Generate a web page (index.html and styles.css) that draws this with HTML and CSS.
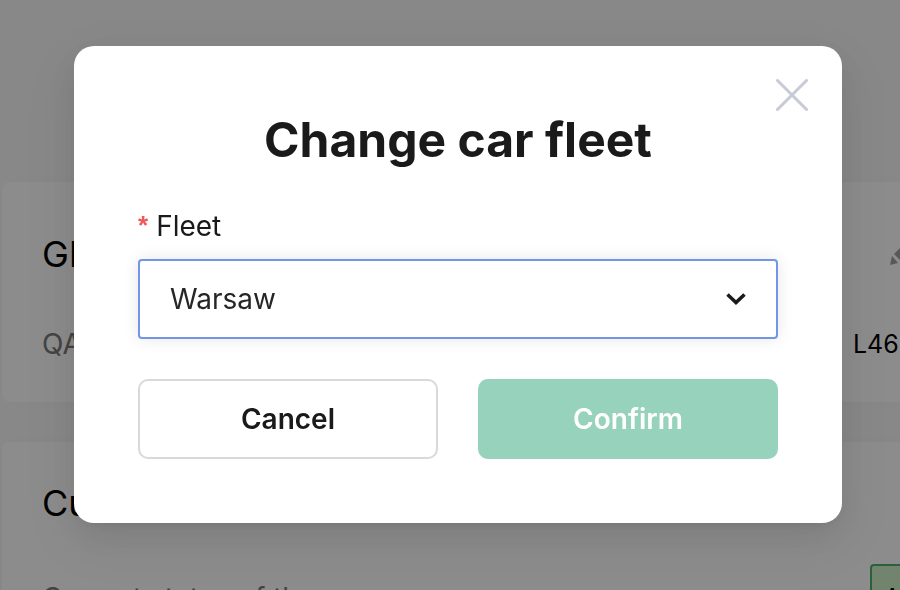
FILE: index.html
```
<!DOCTYPE html>
<html lang="en">
<head>
    <meta charset="UTF-8">
    <meta name="viewport" content="width=device-width, initial-scale=1.0">
    <title>Change car fleet</title>
    <link rel="stylesheet" href="styles.css">
</head>
<body>
    <main class="page">
        <section class="card">
            <div class="card-head card-head-tall">
                <h2>GL</h2>
                <button class="edit" type="button" aria-label="Edit">
                    <svg width="24" height="24" viewBox="0 0 24 24" fill="currentColor">
                        <path d="M0 23L2 14L8 21Z"/>
                        <path d="M4 12L14 2L21 9L11 19Z"/>
                        <path d="M15 1L16 0L23 7L22 8Z"/>
                    </svg>
                </button>
            </div>
            <div class="card-row">
                <span class="label">QA</span>
                <span class="value">L4621119</span>
            </div>
        </section>

        <section class="card">
            <div class="card-head">
                <h2>Cu</h2>
            </div>
            <div class="card-row">
                <span class="label">Current status of the</span>
                <button class="status" type="button">Active</button>
            </div>
        </section>
    </main>

    <div class="overlay">
        <form class="modal" role="dialog" aria-labelledby="modal-title">
            <button class="close" type="button" aria-label="Close">
                <svg width="32" height="32" viewBox="0 0 32 32" fill="none" stroke="currentColor" stroke-width="3" stroke-linecap="round">
                    <path d="M1.5 1.5L30.5 30.5M30.5 1.5L1.5 30.5"/>
                </svg>
            </button>
            <h1 id="modal-title">Change car fleet</h1>
            <label for="fleet"><span class="required">*</span>Fleet</label>
            <div class="select">
                <select id="fleet">
                    <option>Warsaw</option>
                </select>
                <svg class="arrow" width="20" height="12" viewBox="0 0 20 12" fill="none" stroke="currentColor" stroke-width="3.5">
                    <path d="M1.5 1.5L10 9.5L18.5 1.5"/>
                </svg>
            </div>
            <div class="actions">
                <button class="btn" type="button">Cancel</button>
                <button class="btn btn-confirm" type="submit">Confirm</button>
            </div>
        </form>
    </div>
</body>
</html>
```
FILE: styles.css
```
* {
    box-sizing: border-box;
}
body {
    margin: 0;
    font-family: Inter, "Liberation Sans", sans-serif;
    font-size: 28px;
    line-height: 36px;
    color: #000;
    background: #f7f7f7;
}
h1, h2 {
    margin: 0;
}
button, select {
    font: inherit;
    cursor: pointer;
}
svg {
    display: block;
}

/* page behind the modal */
.page {
    height: 100vh;
    padding: 182px 0 0 2px;
    overflow: hidden;
}
.card {
    margin: 0 -100px 40px 0;
    padding: 40px;
    background: #fff;
    border-radius: 8px;
    box-shadow: 0 0 20px rgba(0, 0, 0, 0.01);
}
.card-head,
.card-row {
    display: flex;
    align-items: center;
    justify-content: space-between;
}
.card-head {
    margin-bottom: 40px;
}
.card-head-tall {
    height: 64px;
}
.card h2 {
    font-size: 36px;
    font-weight: 400;
    line-height: 42px;
}
.edit {
    width: 70px;
    padding: 0;
    color: #a0a0a0;
    background: none;
    border: none;
}
.label {
    color: #7a7a7a;
}
.value {
    font-size: 25px;
}
.status {
    width: 90px;
    height: 68px;
    padding: 0 0 0 12px;
    font-size: 24px;
    text-align: left;
    background: #cfeec9;
    border: 2px solid #4fb070;
    border-radius: 4px;
}

/* modal */
.overlay {
    position: fixed;
    inset: 0;
    padding: 46px 58px 0 74px;
    background: rgba(0, 0, 0, 0.45);
}
.modal {
    position: relative;
    padding: 64px;
    color: #1a1a1a;
    background: #fff;
    border-radius: 20px;
    box-shadow: 0 6px 12px -8px rgba(0, 0, 0, 0.12),
        0 12px 32px rgba(0, 0, 0, 0.08),
        0 18px 56px 16px rgba(0, 0, 0, 0.05);
}
.modal h1 {
    margin-bottom: 38px;
    font-size: 48px;
    font-weight: 700;
    line-height: 60px;
    text-align: center;
}
.close {
    position: absolute;
    top: 33px;
    right: 34px;
    padding: 0;
    color: #c8cad6;
    background: none;
    border: none;
}
label {
    display: block;
    height: 36px;
    margin-bottom: 15px;
}
.required {
    margin-right: 8px;
    font-family: "Liberation Sans", sans-serif;
    font-size: 26px;
    font-weight: 700;
    line-height: 1;
    vertical-align: 2px;
    color: #f0595a;
}
.select {
    position: relative;
    margin-bottom: 40px;
}
.select select {
    display: block;
    width: 100%;
    height: 80px;
    padding: 0 30px;
    color: #262626;
    background: #fff;
    border: 2px solid #7395e6;
    border-radius: 4px;
    box-shadow: 0 0 16px rgba(0, 0, 0, 0.1);
    appearance: none;
    outline: none;
}
.arrow {
    position: absolute;
    top: 34px;
    right: 32px;
    pointer-events: none;
}
.actions {
    display: flex;
    gap: 40px;
}
.btn {
    flex: 1;
    height: 80px;
    font-weight: 600;
    color: #1a1a1a;
    background: #fff;
    border: 2px solid #d9d9d9;
    border-radius: 10px;
}
.btn-confirm {
    color: #fff;
    background: #97d2bc;
    border-color: #97d2bc;
}
```
